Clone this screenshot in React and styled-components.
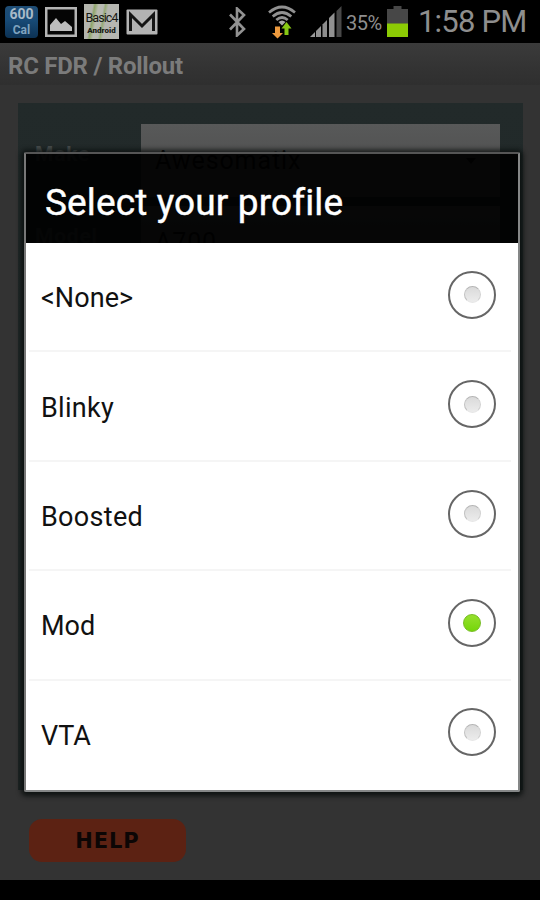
import React from 'react'
import styled, { createGlobalStyle } from 'styled-components'

const GlobalStyle = createGlobalStyle`
  body {
    margin: 0;
    background: #000;
    font-family: Roboto, "Liberation Sans", sans-serif;
  }
`

const Screen = styled.div`
  position: relative;
  width: 540px;
  height: 900px;
  overflow: hidden;
  display: flex;
  flex-direction: column;
  background: #000;
`

const StatusBar = styled.header`
  height: 43px;
  flex: none;
  box-sizing: border-box;
  display: flex;
  align-items: center;
  justify-content: space-between;
  padding: 0 13px 0 5px;
  background: #000;
  color: #8e8e8e;
`

const Notifications = styled.div`
  display: flex;
  align-items: center;
  gap: 7px;
`

const Indicators = styled.div`
  display: flex;
  align-items: center;
`

const CalorieIcon = styled.div`
  width: 33px;
  height: 32px;
  box-sizing: border-box;
  display: flex;
  flex-direction: column;
  align-items: center;
  border-radius: 4px;
  background: linear-gradient(#1f4d75, #174a76 45%, #0c3153);
  color: #a9bac8;
  font-size: 14px;
  font-weight: 700;
  line-height: 17px;
`

const CalorieUnit = styled.div`
  font-size: 12px;
  line-height: 15px;
  color: #7fa3bf;
`

const BasicIcon = styled.div`
  width: 35px;
  height: 35px;
  box-sizing: border-box;
  display: flex;
  flex-direction: column;
  align-items: center;
  padding-top: 6px;
  background: linear-gradient(100deg, #b4b5ae 22%, #8fa56a 27%, #b9bcb0 36%, #b7b8b3 48%, #96aa75 53%, #b5b6b1 60%);
  color: #171914;
  font-size: 12.5px;
  line-height: 16px;
  letter-spacing: -0.9px;
  white-space: nowrap;
`

const BasicCaption = styled.div`
  font-size: 8px;
  font-weight: 900;
  line-height: 10px;
  letter-spacing: 0;
`

const Glyph = styled.svg`
  display: block;
  flex: none;
  margin-right: ${props => props.$gap || 0}px;
`

const Percent = styled.span`
  width: 41px;
  font-size: 20px;
  letter-spacing: -0.5px;
  line-height: 43px;
  padding-top: 3px;
  box-sizing: border-box;
`

const Clock = styled.span`
  width: 109px;
  margin-left: 10px;
  padding-top: 1px;
  font-size: 31px;
  line-height: 42px;
  letter-spacing: -0.8px;
  white-space: nowrap;
`

const TitleBar = styled.div`
  height: 42px;
  flex: none;
  padding-left: 8px;
  background: linear-gradient(#3b3b3b, #333 60%, #2f2f2f);
  color: #7b7b7b;
  font-size: 24px;
  font-weight: 700;
  line-height: 46px;
  letter-spacing: -0.25px;
`

const Page = styled.main`
  height: 795px;
  flex: none;
  box-sizing: border-box;
  padding: 18px 17px 0 18px;
  background: #333;
`

const Card = styled.section`
  height: 687px;
  box-sizing: border-box;
  padding: 21px 23px 0 17px;
  background: linear-gradient(#222a2a, #1d2424);
`

const Field = styled.div`
  display: flex;
  margin-bottom: 9px;
`

const Label = styled.div`
  width: 106px;
  font-size: 21px;
  font-weight: 700;
  line-height: 61px;
  letter-spacing: 0.8px;
  color: #474d4d;
`

const Select = styled.div`
  flex: 1;
  height: 73px;
  box-sizing: border-box;
  display: flex;
  align-items: center;
  justify-content: space-between;
  padding: 0 24px 0 14px;
  background: linear-gradient(#585959, #4a4a4a);
  color: #090909;
  font-size: 25px;
  letter-spacing: 0.9px;
`

const Help = styled.div`
  width: 157px;
  height: 43px;
  margin: 29px 0 0 11px;
  border-radius: 13px;
  background: #5c2213;
  color: #0c0605;
  text-align: center;
  font-family: "DejaVu Sans", sans-serif;
  font-size: 21px;
  font-weight: 700;
  line-height: 44px;
  letter-spacing: 0.9px;
`

const BottomBar = styled.div`
  flex: 1;
  background: #000;
`

/* lies over the page */
const Dialog = styled.div`
  position: absolute;
  left: 24px;
  top: 152px;
  width: 496px;
  height: 640px;
  box-sizing: border-box;
  display: flex;
  flex-direction: column;
  border: 2px solid;
  border-color: #555 #858787 #858787 #777;
  border-radius: 2px;
  box-shadow: 0 1px 5px 3px rgba(8, 13, 12, 0.85);
`

const DialogTitle = styled.h1`
  height: 89px;
  flex: none;
  margin: 0;
  padding-left: 19px;
  background: rgba(0, 0, 0, 0.92);
  color: #fff;
  font-size: 37px;
  font-weight: 400;
  line-height: 98px;
  letter-spacing: 0.12px;
  -webkit-text-stroke: 0.4px #fff;
`

const Options = styled.div`
  flex: 1;
  display: flex;
  flex-direction: column;
  padding: 0 7px 0 3px;
  background: #fff;
`

const Option = styled.div`
  flex: 1;
  box-sizing: border-box;
  display: flex;
  align-items: center;
  justify-content: space-between;
  padding: 0 15px 4px 12px;
  border-bottom: 2px solid ${props => props.$last ? '#fff' : '#f5f5f5'};
  color: #111;
  font-size: 27px;
`

const OptionText = styled.span`
  padding-top: 7px;
  letter-spacing: ${props => props.$spacing || 0}px;
`

const Radio = styled.span`
  width: 48px;
  height: 48px;
  box-sizing: border-box;
  display: flex;
  align-items: center;
  justify-content: center;
  border: 2px solid #666;
  border-radius: 50%;
`

const Dot = styled.span`
  width: ${props => props.$checked ? 18 : 17}px;
  height: ${props => props.$checked ? 18 : 17}px;
  box-sizing: border-box;
  border-radius: 50%;
  border: 1px solid;
  border-color: ${props => props.$checked ? '#76bd22' : '#b5b5b5 #d2d2d2 #e6e6e6 #c2c2c2'};
  background: ${props => props.$checked ? 'linear-gradient(#96e02d, #75d60a)' : 'linear-gradient(#dadada, #ececec)'};
`

const OPTIONS = [
  { name: '<None>', spacing: 0.1 },
  { name: 'Blinky', spacing: 0.3 },
  { name: 'Boosted', spacing: 0.3 },
  { name: 'Mod', spacing: 0 },
  { name: 'VTA', spacing: 0 }
]
const SELECTED = 'Mod'

const PictureIcon = () => (
  <Glyph width='32' height='30' viewBox='0 0 32 30'>
    <rect x='1.25' y='1.25' width='29.5' height='27.5' fill='#050505' stroke='#b4b4b4' strokeWidth='2.5' />
    <path d='M5 24v-6l6-7 5 6 4-3 7 6v4z' fill='#bcbcbc' />
  </Glyph>
)

const MailIcon = () => (
  <Glyph width='32' height='26' viewBox='0 0 32 26'>
    <rect x='0.5' y='0.5' width='31' height='25' rx='1' fill='#b3b3b3' />
    <path d='M4.500 22V5.500L16 17 27.500 5.500V22' fill='none' stroke='#151515' strokeWidth='3' />
  </Glyph>
)

const BluetoothIcon = () => (
  <Glyph width='18' height='30' viewBox='0 0 18 30' $gap={21}>
    <path d='M2 7.5l14 14.5-7 6.5V1.5l7 6.5L2 22.5' fill='none' stroke='#929292' strokeWidth='2.6' />
  </Glyph>
)

const WifiIcon = () => (
  <Glyph width='30' height='34' viewBox='0 0 30 34' $gap={13}>
    <g fill='none' stroke='#919191' strokeWidth='2.7'>
      <path d='M2 7.5q13-11 26 0' />
      <path d='M5.7 11.5q9.3-8 18.6 0' />
      <path d='M9.3 15q5.7-5 11.4 0' />
    </g>
    <path d='M11.5 17q3.5-3 7 0L15 20.5z' fill='#aaa' />
    <path d='M8 21.5h5v6.500h3L10.500 33.500 5 28h3z' fill='#ed9a3e' />
    <path d='M17.500 30v-6.500H14.500L19.500 17l5 6.500h-3V30z' fill='#87c714' />
  </Glyph>
)

const SignalIcon = () => (
  <Glyph width='32' height='32' viewBox='0 0 32 32' $gap={4}>
    <path d='M0 31l5-5v5z' fill='#999' />
    <path d='M6 31v-6l5-5v11z' fill='#919191' />
    <path d='M12.500 31V18.500l4.500-4.500V31z' fill='#8c8c8c' />
    <path d='M19 31V12l5.500-5.500V31z' fill='#919191' />
    <path d='M26.500 31V5l5-5v31z' fill='#484848' />
  </Glyph>
)

const BatteryIcon = () => (
  <Glyph width='21' height='31' viewBox='0 0 21 31'>
    <path d='M6.500 0h8v3H21v15H0V3h6.500z' fill='#474747' />
    <path d='M0 17.500h21V31H0z' fill='#8ccb04' />
  </Glyph>
)

const Arrow = () => (
  <Glyph width='10' height='6' viewBox='0 0 10 6'>
    <path d='M0 0h10L5 6z' fill='#111' />
  </Glyph>
)

export default function App() {
  return (
    <Screen>
      <GlobalStyle />
      <StatusBar>
        <Notifications>
          <CalorieIcon>
            600
            <CalorieUnit>Cal</CalorieUnit>
          </CalorieIcon>
          <PictureIcon />
          <BasicIcon>
            Basic4
            <BasicCaption>Android</BasicCaption>
          </BasicIcon>
          <MailIcon />
        </Notifications>
        <Indicators>
          <BluetoothIcon />
          <WifiIcon />
          <SignalIcon />
          <Percent>35%</Percent>
          <BatteryIcon />
          <Clock>1:58 PM</Clock>
        </Indicators>
      </StatusBar>
      <TitleBar>RC FDR / Rollout</TitleBar>
      <Page>
        <Card>
          <Field>
            <Label>Make</Label>
            <Select>Awesomatix <Arrow /></Select>
          </Field>
          <Field>
            <Label>Model</Label>
            <Select>A700</Select>
          </Field>
        </Card>
        <Help>HELP</Help>
      </Page>
      <BottomBar />
      <Dialog>
        <DialogTitle>Select your profile</DialogTitle>
        <Options>
          {OPTIONS.map((option, i) => (
            <Option key={option.name} $last={i === OPTIONS.length - 1}>
              <OptionText $spacing={option.spacing}>{option.name}</OptionText>
              <Radio>
                <Dot $checked={option.name === SELECTED} />
              </Radio>
            </Option>
          ))}
        </Options>
      </Dialog>
    </Screen>
  )
}
